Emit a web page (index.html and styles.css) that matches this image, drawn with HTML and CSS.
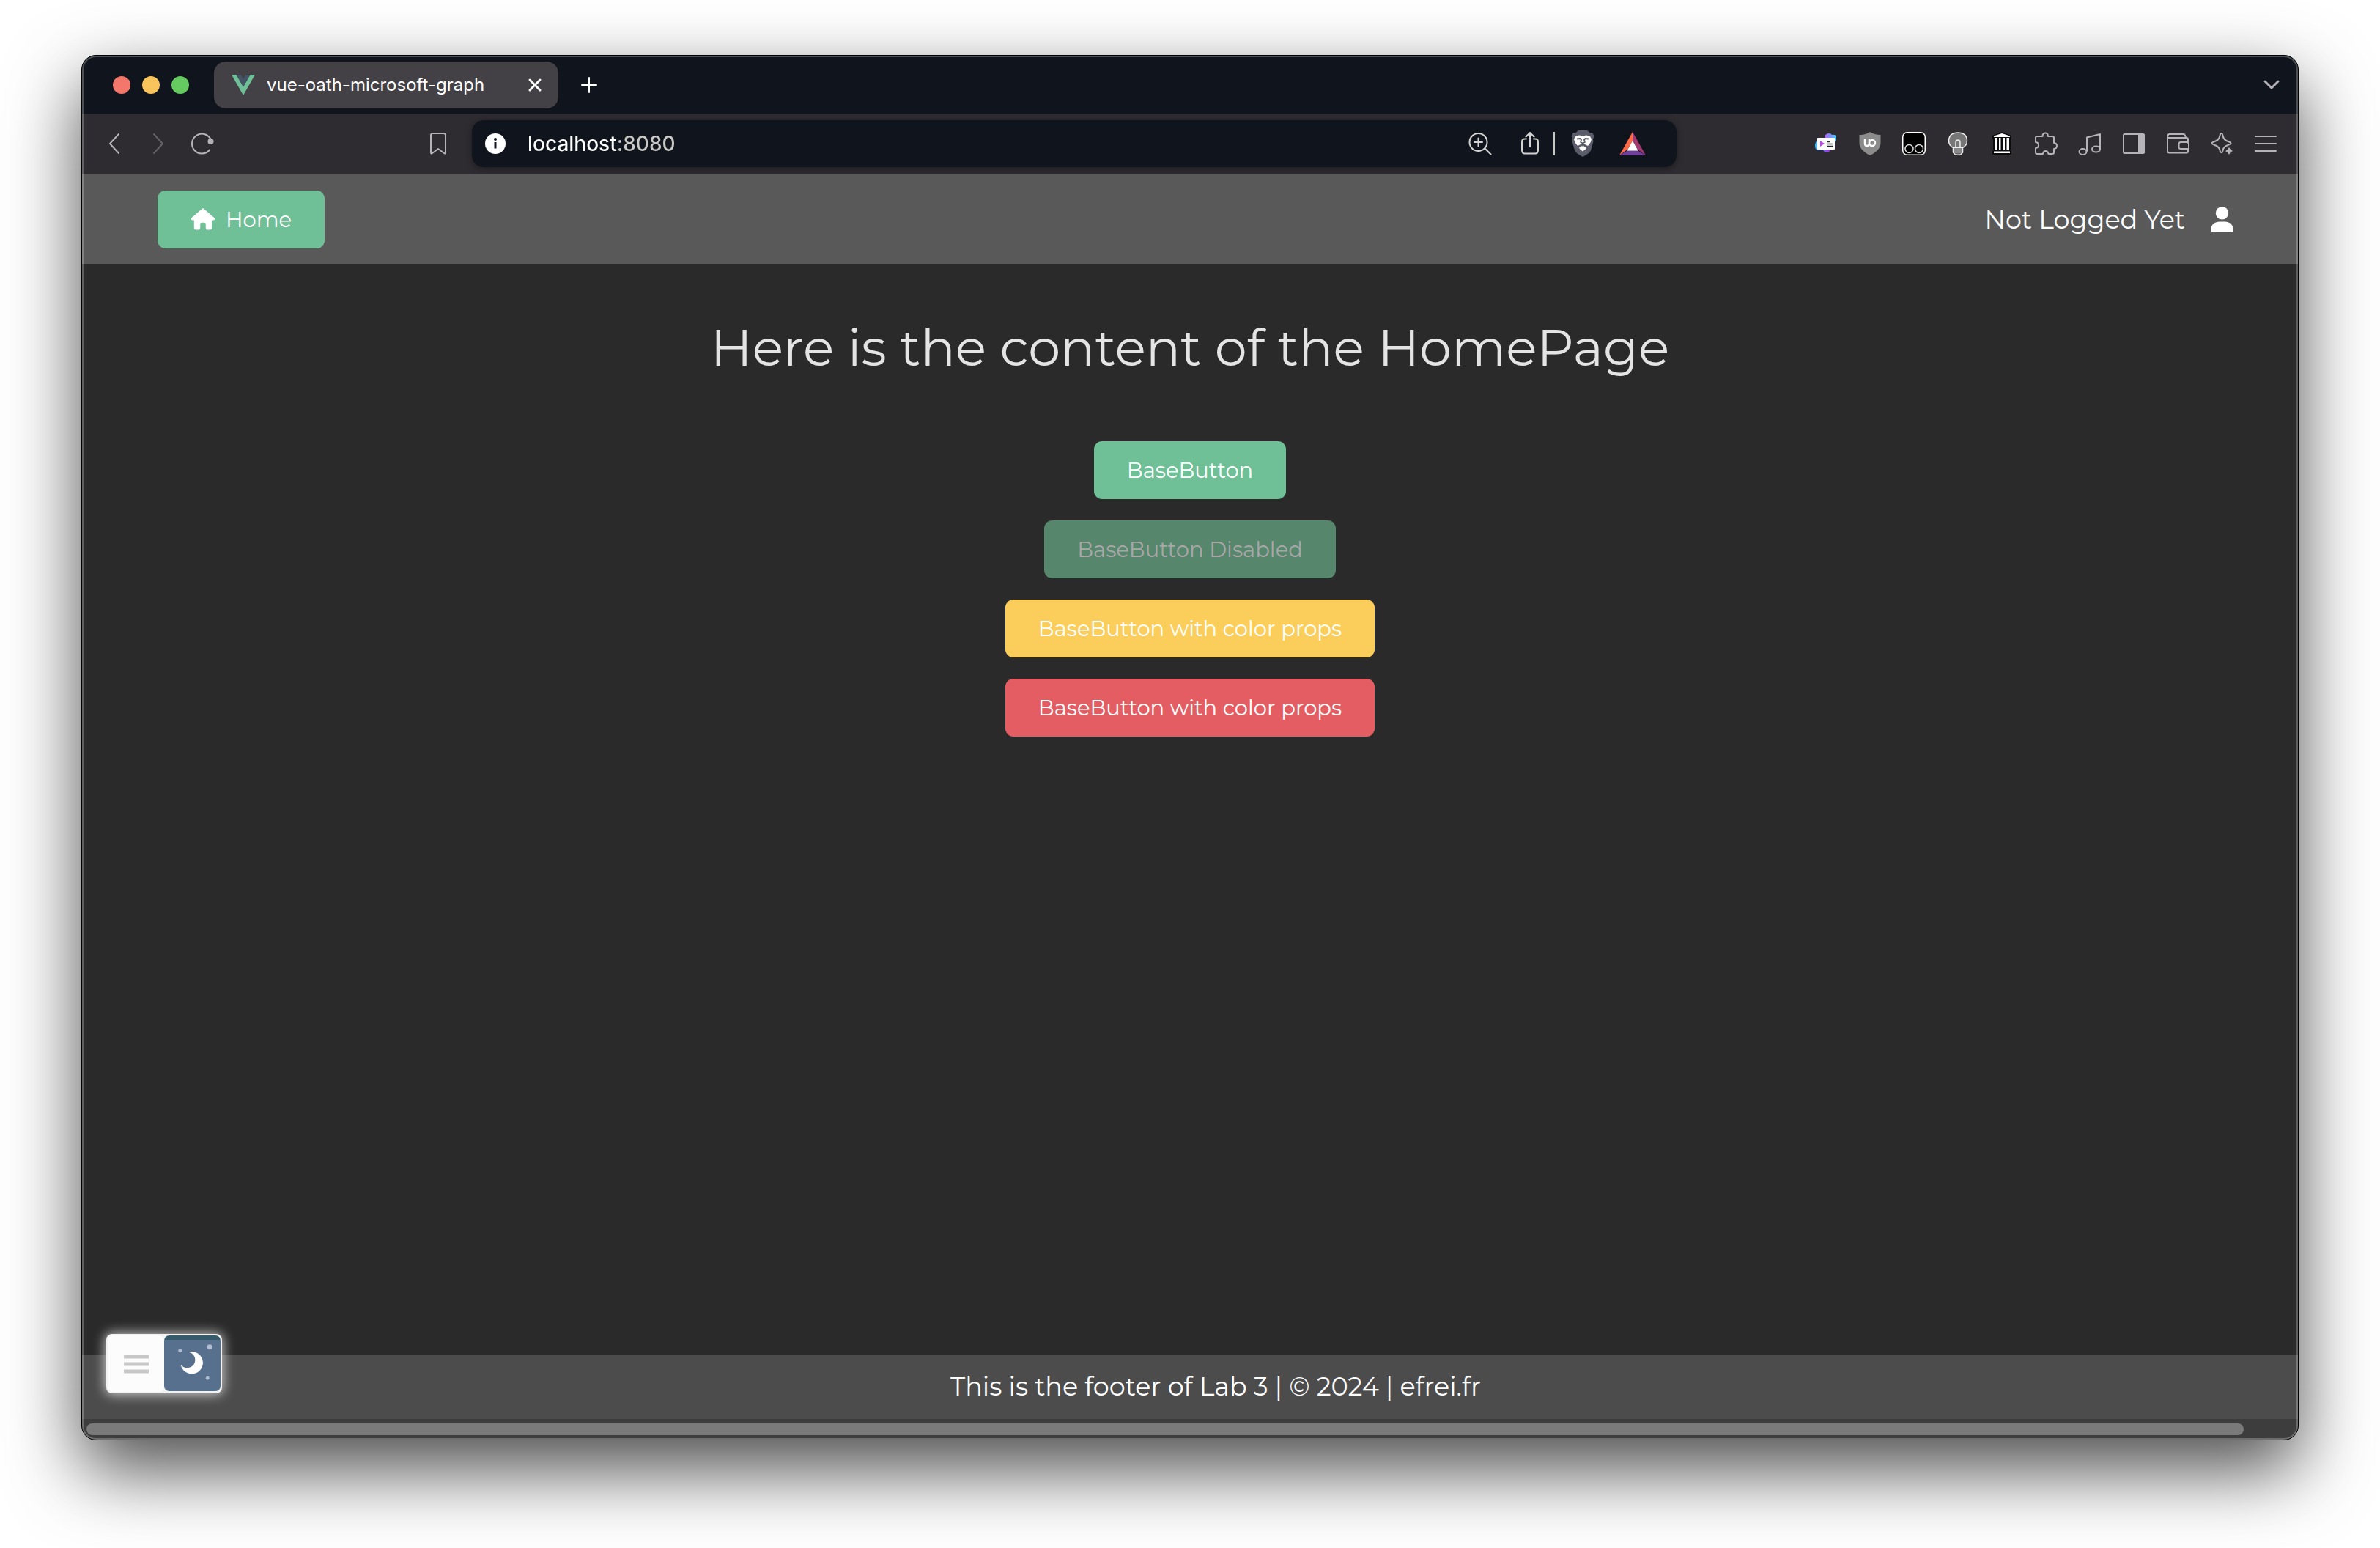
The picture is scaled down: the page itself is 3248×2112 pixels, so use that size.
FILE: index.html
```html
<!DOCTYPE html>
<html lang="en">
<head>
<meta charset="utf-8">
<meta name="viewport" content="width=device-width, initial-scale=1">
<title>vue-oath-microsoft-graph</title>
<link rel="stylesheet" href="styles.css">
</head>
<body>
<div class="window">
  <header class="tabstrip">
    <div class="lights">
      <button class="light light-close" aria-label="Close window"></button>
      <button class="light light-min" aria-label="Minimize window"></button>
      <button class="light light-max" aria-label="Zoom window"></button>
    </div>
    <div class="tab">
      <svg class="icon" viewBox="0 0 32 32"><path fill="#6fbf97" d="M0 2h6.500L16 18.500 25.500 2H32L16 30z"/><path fill="#435466" d="M6.500 2h6L16 8l3.500-6h6L16 18.500z"/></svg>
      <span class="tab-title">vue-oath-microsoft-graph</span>
      <button class="icon-btn small" aria-label="Close tab"><svg viewBox="0 0 24 24"><path class="line white bold" d="M5 5l14 14M19 5L5 19"/></svg></button>
    </div>
    <button class="icon-btn small new-tab" aria-label="New tab"><svg viewBox="0 0 24 24"><path class="line white" d="M12 2v20M2 12h20"/></svg></button>
    <button class="icon-btn small tab-search" aria-label="Search tabs"><svg viewBox="0 0 24 24"><path class="line thick" d="M3 7l9 9 9-9"/></svg></button>
  </header>

  <div class="toolbar">
    <nav class="tools-left" aria-label="History">
      <button class="icon-btn" aria-label="Back"><svg viewBox="0 0 32 32"><path class="line" d="M22 3L10 16l12 13"/></svg></button>
      <button class="icon-btn dim" aria-label="Forward"><svg viewBox="0 0 32 32"><path class="line" d="M10 3l12 13-12 13"/></svg></button>
      <button class="icon-btn" aria-label="Reload"><svg viewBox="0 0 32 32"><path class="line" d="M26 24.500A13.500 13.500 0 1 1 28 11"/><circle cx="27.500" cy="13" r="4" fill="#b5b3b8"/></svg></button>
      <button class="icon-btn bookmark" aria-label="Bookmark this page"><svg viewBox="0 0 32 32"><path class="line" d="M6 4.500Q6 2 8.500 2h15Q26 2 26 4.500V28q0 2.500-2 1l-8-6-8 6q-2 1.500-2-1z"/></svg></button>
    </nav>
    <div class="address">
      <svg class="icon" viewBox="0 0 32 32"><circle cx="16" cy="16" r="14" fill="#fff"/><path d="M16 14v8.500" stroke="#10151d" stroke-width="3"/><circle cx="16" cy="10" r="2" fill="#10151d"/></svg>
      <input class="url" type="text" value="localhost:8080" aria-label="Address">
      <button class="icon-btn zoom" aria-label="Zoom"><svg viewBox="0 0 32 32"><g class="line light-line"><circle cx="13.500" cy="14" r="12"/><path d="M22.500 22.500l8 8M13.500 8.500v11M8 14h11"/></g></svg></button>
      <button class="icon-btn" aria-label="Share"><svg viewBox="0 0 32 32"><path class="line light-line" d="M16 20V1M10.500 6.500L16 1l5.500 5.500M11 9.500H9Q5 9.500 5 13.500V25q0 4.500 4 4.500h14q4 0 4-4.500V13.500q0-4-4-4h-2"/></svg></button>
      <span class="divider"></span>
      <button class="icon-btn big" aria-label="Brave Shields"><svg viewBox="0 0 36 36"><path fill="#5b5c69" d="M12 0h12l4 3.500 3-.5 2.500 4.500-1.500 4 .5 3.500-3.500 12q-.5 2-3 4l-6 4q-2 1.300-4 0l-6-4q-2.500-2-3-4L3.500 15l.5-3.500-1.500-4L5 3l3 .5z"/><path fill="#fff" d="M8 8l5-1.500 5 1 5-1L28 8l2 4-1.500 4.500L25 21l-4-2-3-1-3 1-4 2-3.500-4.500L6 12z"/><path fill="#fff" d="M18 20.500l5 3-1.500 2.500-3.500 2.500-3.500-2.500-1.500-2.500z"/><path fill="none" stroke="#5b5c69" stroke-width="1.800" d="M10 11.500l4.500-.5 1.500 1.500-.8 3.500 2.800 1.500 2.800-1.500-.8-3.500 1.500-1.500 4.500.5M18 17.500v4"/></svg></button>
      <button class="icon-btn big rewards" aria-label="Brave Rewards"><svg viewBox="0 0 36 36"><path fill="#ff6a48" d="M18 2v12l-6.500 11.500L0 34z"/><path fill="#a3396f" d="M18 2v12l6.500 11.500L36 34z"/><path fill="#70419b" d="M0 34l11.500-7h13L36 34z"/><path fill="#fff" d="M18 14l7.500 13.500h-15z"/></svg></button>
    </div>
    <div class="tools-right">
      <button class="icon-btn" aria-label="Media extension"><svg viewBox="0 0 32 32"><defs><linearGradient id="a" x1="0" x2="1"><stop offset="0" stop-color="#b45cf0"/><stop offset="1" stop-color="#42c9ff"/></linearGradient><linearGradient id="b" x1="0" x2="1"><stop offset="0" stop-color="#35c3ff"/><stop offset="1" stop-color="#a22bd0"/></linearGradient></defs><path fill="url(#a)" d="M14 9q0-7 6-7 3 0 4 2 6-1 6 4 0 3-2 5H14z"/><path fill="url(#b)" d="M7 10q-6 2-6 9 0 6 6 6 3 0 5-1 1 4 5 4 5 0 5-6z"/><rect x="4" y="8" width="24" height="16" rx="1" fill="#fff"/><path fill="#b64ce8" d="M8 12v8l6-4z"/><path stroke="#222" stroke-width="1.500" d="M17 13.500h4M17 16.500h9M17 19.500h9"/></svg></button>
      <button class="icon-btn" aria-label="uBlock Origin"><svg viewBox="0 0 32 32"><path fill="#8b8b8b" d="M16 0q6 4 14.500 4v11q0 10-14.500 17Q1.500 25 1.500 15V4Q10 4 16 0z"/><path fill="none" stroke="#fff" stroke-width="2.500" d="M9 10v6q0 3 3 3t3-3v-6"/><circle cx="19" cy="15" r="4" fill="none" stroke="#fff" stroke-width="2.500"/></svg></button>
      <button class="icon-btn" aria-label="Tampermonkey"><svg viewBox="0 0 32 32"><rect x=".75" y=".75" width="30.500" height="30.500" rx="6" fill="#000" stroke="#fff" stroke-width="1.500"/><g fill="none" stroke="#ddd" stroke-width="1.500"><circle cx="9.500" cy="23" r="5.500"/><circle cx="23" cy="23" r="5.500"/></g></svg></button>
      <button class="icon-btn" aria-label="Lightbulb extension"><svg viewBox="0 0 32 32"><path fill="#767676" stroke="#eee" stroke-width="1.500" d="M10 21.500Q3.500 19 3.500 12 4 1 16 1t12.500 11q0 7-6.500 9.500z"/><path fill="#777" stroke="#eee" stroke-width="1.500" d="M13 21.500V14q0-3 3-3t3 3v7.500"/><path fill="#666" stroke="#eee" stroke-width="1.500" d="M9.500 21.500h13V28l-3 3.200h-7l-3-3.200z"/><path stroke="#eee" stroke-width="1.500" d="M9.500 24.500h13M9.500 27.500h13"/></svg></button>
      <button class="icon-btn" aria-label="Archive extension"><svg viewBox="0 0 32 32"><path fill="#0c0c0e" d="M3 9V5L16 0l13 5v4l-1 2v13l1 2v5H3v-5l1-2V11z"/><path fill="#fff" d="M5 5.500L16 2l11 3.500V7H5zM6 8h3.500v17H6zM12 8h2.500v17H12zM17.500 8H20v17h-2.500zM22.500 8H26v17h-3.500zM5 26.500h22V29H5z"/></svg></button>
      <button class="icon-btn" aria-label="Extensions"><svg viewBox="0 0 32 32"><path class="line" d="M4 6h7.500q0-4.500 3.700-4.500T19 6h6q2 0 2 2v7q4 .5 4 4t-4 4v5q0 2-2 2h-5.500q-.5-4-3.800-4t-3.700 4H4q-2 0-2-2v-6q4-.5 4-4t-4-4V8q0-2 2-2z"/></svg></button>
      <button class="icon-btn" aria-label="Media playlist"><svg viewBox="0 0 32 32"><g class="line"><ellipse cx="6.500" cy="27" rx="5" ry="4"/><ellipse cx="24.500" cy="23.500" rx="5.500" ry="4"/><path d="M12 26V7.500L30 3v20"/></g></svg></button>
      <button class="icon-btn" aria-label="Sidebar"><svg viewBox="0 0 32 32"><rect class="line" x="2" y="3" width="28" height="26" rx="1.500"/><path fill="#b5b3b8" d="M22 3h9v26h-9z"/></svg></button>
      <button class="icon-btn" aria-label="Wallet"><svg viewBox="0 0 32 32"><path class="line" d="M30 15V10q0-2-2-2H4Q2 8 2 6t2-3h20q2 0 3 5M2 5v21q0 2.500 2.500 2.500H28q2 0 2-2V23M31 14H20q-2.500 0-2.500 2.500v4Q17.500 23 20 23h11z"/></svg></button>
      <button class="icon-btn" aria-label="Leo AI"><svg viewBox="0 0 32 32"><path class="line" d="M15.500 2q1.500 0 2 3 1 6 7 8 4 1.500 4 2.500t-4 2.500q-6 2-7 7-.5 3-2 3t-2-3q-1-5-7-7-4-1.500-4-2.500t4-2.500q6-2 7-8 .5-3 2-3z"/><path fill="#b5b3b8" stroke="#2e2c31" d="M26 19q1.500 6 6.500 7-5 1-6.500 6-1.500-5-6.500-6 5-1 6.500-7z"/></svg></button>
      <button class="icon-btn" aria-label="Menu"><svg viewBox="0 0 32 32"><path class="line" d="M2 6h28M2 16h28M2 26h28"/></svg></button>
    </div>
  </div>

  <div class="page">
    <nav class="navbar">
      <button class="btn"><svg class="home-icon" viewBox="0 0 36 32"><path fill="#fff" d="M16.500 1q1.500-1.300 3 0L34.500 14q1.200 1.200.5 2.500-.5 1-2 1H31V29q0 2.500-2.500 2.500h-4Q22 31.500 22 29v-6q0-2-2-2h-4q-2 0-2 2v6q0 2.500-2.500 2.500h-4Q5 31.500 5 29V17.500H3q-1.500 0-2-1-.7-1.300.5-2.500z"/></svg>Home</button>
      <div class="account">
        <span>Not Logged Yet</span>
        <svg class="user-icon" viewBox="0 0 32 36"><circle cx="16" cy="9" r="9" fill="#fff"/><path fill="#fff" d="M12.500 21h7Q32 21.500 32 34q0 2-2 2H2q-2 0-2-2 0-12.500 12.500-13z"/></svg>
      </div>
    </nav>
    <main class="content">
      <h1>Here is the content of the HomePage</h1>
      <div class="buttons">
        <button class="btn">BaseButton</button>
        <button class="btn" disabled>BaseButton Disabled</button>
        <button class="btn btn-warn">BaseButton with color props</button>
        <button class="btn btn-danger">BaseButton with color props</button>
      </div>
    </main>
    <footer class="footer">This is the footer of Lab 3 | © 2024 | efrei.fr</footer>
    <div class="mode-switch">
      <button class="mode-menu" aria-label="Options"><svg viewBox="0 0 36 26"><path stroke="#c8c8c8" stroke-width="5" d="M1 3h34M1 13h34M1 23h34"/></svg></button>
      <label class="mode-dark">
        <input type="checkbox" checked aria-label="Dark mode">
        <svg viewBox="0 0 78 76"><path fill="#fff" d="M33.700 23A15.400 15.400 0 1 1 23 40.300 11 11 0 1 0 33.700 23z"/><g fill="#b3bdd2"><circle cx="22" cy="21" r="2.500"/><circle cx="63" cy="16" r="3.500"/><circle cx="60" cy="59" r="2.500"/></g></svg>
      </label>
    </div>
  </div>
  <div class="scrollbar"><div class="thumb"></div></div>
</div>
</body>
</html>
```
FILE: styles.css
```css
* {
  box-sizing: border-box;
}

body {
  margin: 0;
  min-height: 100vh;
  padding: 75px 111px 147px;
  display: flex;
  background: #fff;
  color: #fff;
  font-family: Montserrat, Inter, sans-serif;
}

button,
input {
  font: inherit;
  color: inherit;
  border: 0;
  padding: 0;
  margin: 0;
  background: none;
}

svg {
  display: block;
}

/* Browser window */
.window {
  position: relative;
  flex: 1;
  display: flex;
  flex-direction: column;
  border: 1px solid #000;
  border-radius: 20px;
  overflow: hidden;
  background: #2a2a2a;
  box-shadow: 0 40px 100px rgba(0, 0, 0, 0.7);
}

.window::after {
  content: "";
  position: absolute;
  inset: 0;
  border: 2px solid rgba(255, 255, 255, 0.25);
  border-radius: 19px;
  pointer-events: none;
}

.line {
  fill: none;
  stroke: #b5b3b8;
  stroke-width: 2;
  stroke-linecap: round;
  stroke-linejoin: round;
}

.line.white {
  stroke: #fff;
}

.line.bold,
.line.thick {
  stroke-width: 3;
}

.line.light-line {
  stroke: #d4d3d1;
}

.icon,
.icon-btn {
  flex: none;
  width: 32px;
  height: 32px;
}

.icon-btn svg {
  width: 100%;
  height: 100%;
}

.icon-btn.small {
  width: 24px;
  height: 24px;
}

.icon-btn.big {
  width: 36px;
  height: 36px;
}

.icon-btn.dim {
  opacity: 0.4;
}

.tabstrip {
  display: flex;
  align-items: center;
  padding: 8px 24px 8px 42px;
  background: #10151d;
}

.lights {
  display: flex;
  gap: 16px;
  margin-right: 34px;
}

.light {
  width: 24px;
  height: 24px;
  border-radius: 50%;
}

.light-close {
  background: #f4776c;
}

.light-min {
  background: #f9c45c;
}

.light-max {
  background: #65cb61;
}

.tab {
  width: 470px;
  height: 64px;
  display: flex;
  align-items: center;
  gap: 16px;
  padding: 0 20px 0 24px;
  border-radius: 16px;
  background: #434145;
}

.tab-title {
  flex: 1;
  font: 400 24px/32px Inter, sans-serif;
}

.new-tab {
  margin-left: 30px;
}

.tab-search {
  margin-left: auto;
}

.toolbar {
  display: grid;
  grid-template-columns: 532fr 1644fr 848fr;
  padding: 8px 0 10px;
  background: #2e2c31;
}

.tools-left,
.tools-right {
  display: flex;
  align-items: center;
  gap: 28px;
  padding: 0 28px;
}

.tools-left {
  padding-right: 30px;
}

.tools-right {
  justify-content: flex-end;
}

.bookmark {
  margin-left: auto;
}

.address {
  display: flex;
  align-items: center;
  height: 64px;
  padding: 0 42px 0 16px;
  border-radius: 16px;
  background: #10151d;
  box-shadow: 0 2px 10px rgba(0, 0, 0, 0.4);
}

/* The host is white, the port after it is dimmed */
.url {
  flex: 1;
  min-width: 0;
  margin-left: 28px;
  font: 500 28px/40px Inter, sans-serif;
  color: transparent;
  background: linear-gradient(90deg, #fff 122px, #c9c8c4 122px);
  -webkit-background-clip: text;
  background-clip: text;
}

.zoom {
  margin-right: 36px;
}

.divider {
  width: 2px;
  height: 32px;
  margin: 0 20px 0 16px;
  background: #c9c8c4;
}

.rewards {
  margin-left: 32px;
}

/* Web page */
.page {
  position: relative;
  flex: 1;
  display: flex;
  flex-direction: column;
}

.navbar {
  display: flex;
  align-items: center;
  justify-content: space-between;
  height: 122px;
  padding: 0 88px 0 103px;
  background: #595959;
}

.btn {
  display: flex;
  align-items: center;
  gap: 14px;
  height: 79px;
  padding: 0 45px;
  border-radius: 11px;
  background: #6fbf97;
  color: #fff;
  font-size: 29px;
}

.btn:disabled {
  background: #56876c;
  color: #a9a6a8;
}

.btn-warn {
  background: #fbce5b;
}

.btn-danger {
  background: #e35d63;
}

.home-icon {
  width: 34px;
  height: 30px;
}

.account {
  display: flex;
  align-items: center;
  gap: 35px;
  font-size: 35px;
}

.user-icon {
  width: 31px;
  height: 35px;
}

.content {
  flex: 1;
  display: flex;
  flex-direction: column;
  align-items: center;
  padding-top: 72px;
}

h1 {
  margin: 0 0 86px;
  font-size: 70px;
  line-height: 84px;
  font-weight: 400;
  color: #e4e4e4;
}

.buttons {
  display: flex;
  flex-direction: column;
  align-items: center;
  gap: 29px;
}

.footer {
  padding: 0 0 0 70px;
  background: #4c4c4c;
  font-size: 35px;
  line-height: 88px;
  text-align: center;
}

.mode-switch {
  position: absolute;
  left: 33px;
  bottom: 35px;
  width: 158px;
  height: 81px;
  display: flex;
  padding: 2px;
  border-radius: 8px;
  background: #f2f2f2;
  box-shadow: 0 0 16px 2px rgba(255, 255, 255, 0.7);
}

.mode-menu {
  flex: 1;
  display: grid;
  place-items: center;
  border-radius: 7px;
  background: #fcfcfc;
}

.mode-menu svg {
  width: 36px;
  height: 26px;
}

.mode-dark {
  width: 77px;
  height: 76px;
  border-radius: 7px;
  overflow: hidden;
  background: linear-gradient(#365c6b 6px, #56708e 6px);
}

.mode-dark input {
  position: absolute;
  appearance: none;
}

.scrollbar {
  height: 28px;
  padding: 6px 74px 6px 6px;
  background: #3d3d3d;
}

.thumb {
  height: 16px;
  border-radius: 8px;
  background: #7a7a7a;
}
```
